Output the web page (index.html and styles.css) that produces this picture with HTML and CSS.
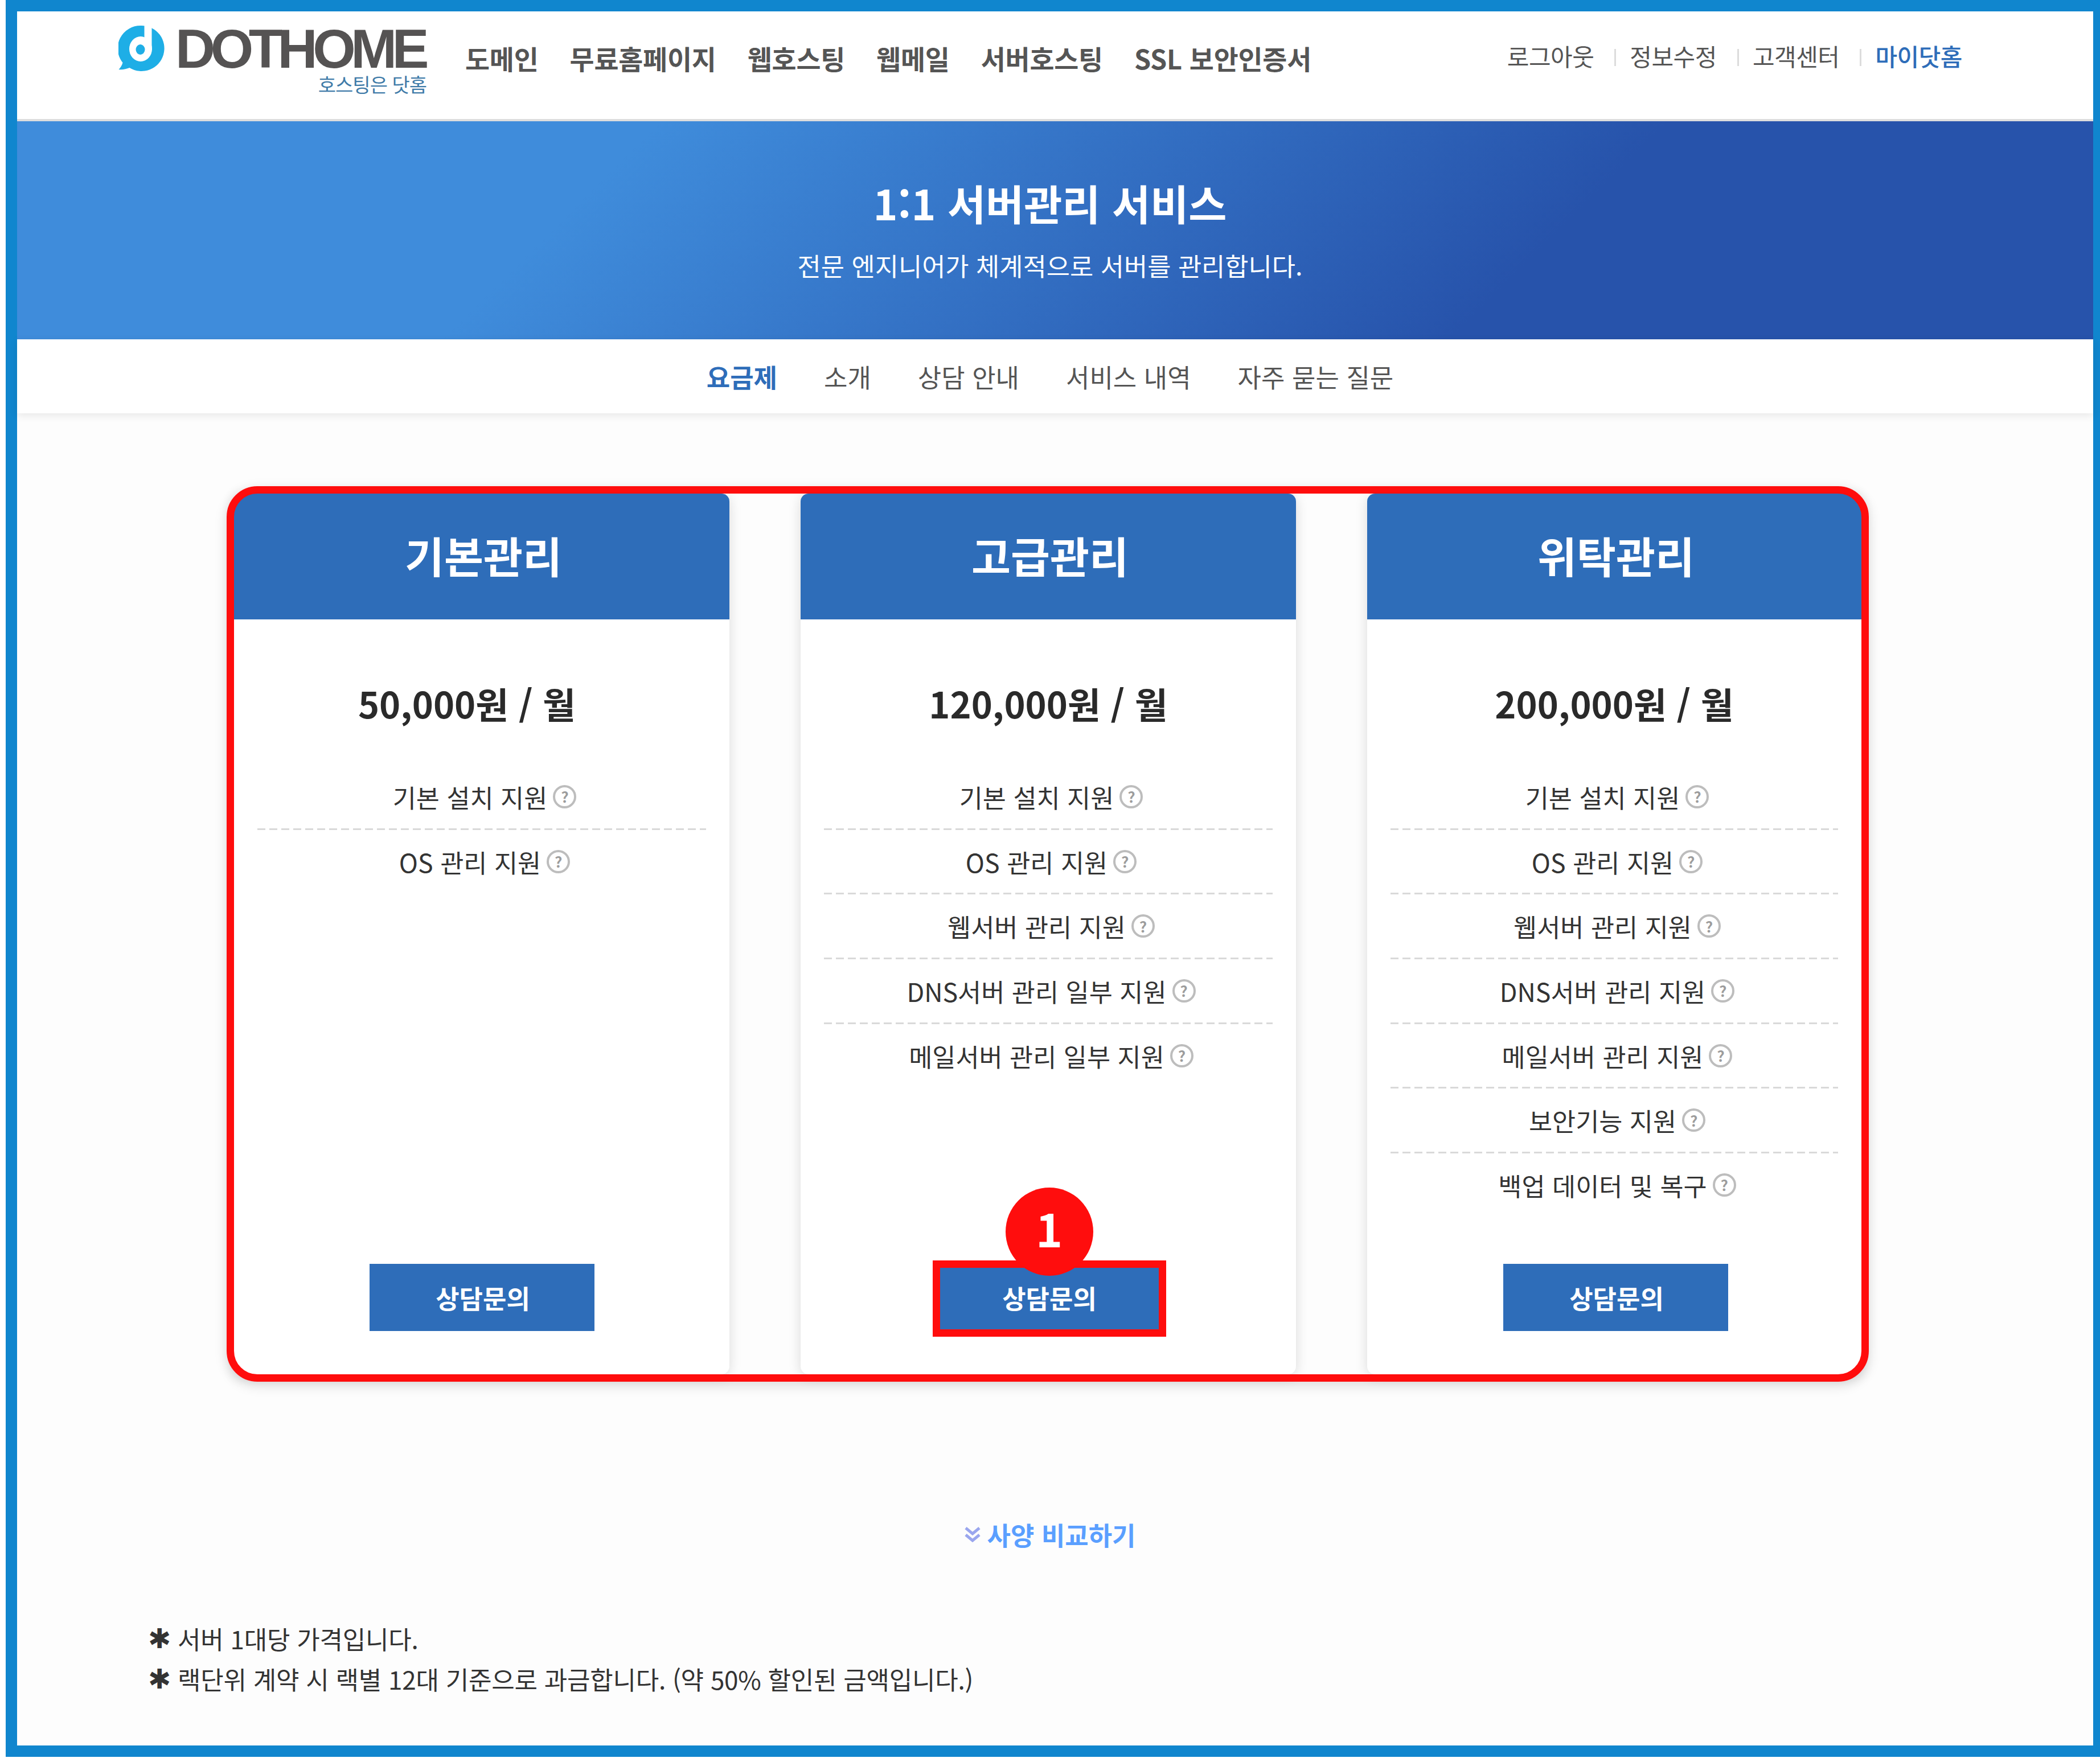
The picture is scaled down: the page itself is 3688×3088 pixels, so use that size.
FILE: index.html
```html
<!DOCTYPE html>
<html lang="ko">
<head>
<meta charset="utf-8">
<title>1:1 서버관리 서비스</title>
<link rel="stylesheet" href="styles.css">
</head>
<body>
<div class="frame">
  <header class="site-header">
    <a class="logo">
      <span class="logo-row">
        <svg class="logo-icon" viewBox="0 0 80 88" aria-hidden="true">
          <path class="logo-blue" d="M40 3a40 40 0 1 1-21 74c-6 2-12 4-19 3 3-3 6-8 7-12A40 40 0 0 1 40 3z"/>
          <rect class="logo-white" x="45" y="0" width="13" height="46"/>
          <ellipse class="logo-white" cx="38.5" cy="44" rx="20" ry="22"/>
          <ellipse class="logo-blue" cx="38" cy="45" rx="8" ry="9"/>
        </svg>
        <span class="logo-name">DOTHOME</span>
      </span>
      <span class="logo-tag">호스팅은 닷홈</span>
    </a>
    <nav class="main-nav">
      <span>도메인</span><span>무료홈페이지</span><span>웹호스팅</span><span>웹메일</span><span>서버호스팅</span><span>SSL 보안인증서</span>
    </nav>
    <nav class="util-nav">
      <span>로그아웃</span><i class="sep"></i><span>정보수정</span><i class="sep"></i><span>고객센터</span><i class="sep"></i><span class="util-active">마이닷홈</span>
    </nav>
  </header>

  <section class="hero">
    <h1 class="hero-title">1:1 서버관리 서비스</h1>
    <p class="hero-sub">전문 엔지니어가 체계적으로 서버를 관리합니다.</p>
  </section>

  <nav class="sub-nav">
    <span class="sub-active">요금제</span><span>소개</span><span>상담 안내</span><span>서비스 내역</span><span>자주 묻는 질문</span>
  </nav>

  <main class="content">
    <div class="plans">
      <article class="plan">
        <h2 class="plan-head">기본관리</h2>
        <div class="plan-body">
          <p class="price price-shifted">50,000원 / 월</p>
          <ul class="features">
            <li>기본 설치 지원<span class="help">?</span></li>
            <li>OS 관리 지원<span class="help">?</span></li>
          </ul>
          <a class="btn">상담문의</a>
        </div>
      </article>
      <article class="plan">
        <h2 class="plan-head">고급관리</h2>
        <div class="plan-body">
          <p class="price">120,000원 / 월</p>
          <ul class="features">
            <li>기본 설치 지원<span class="help">?</span></li>
            <li>OS 관리 지원<span class="help">?</span></li>
            <li>웹서버 관리 지원<span class="help">?</span></li>
            <li>DNS서버 관리 일부 지원<span class="help">?</span></li>
            <li>메일서버 관리 일부 지원<span class="help">?</span></li>
          </ul>
          <a class="btn">상담문의
            <span class="btn-mark"></span>
            <span class="badge">1</span>
          </a>
        </div>
      </article>
      <article class="plan">
        <h2 class="plan-head">위탁관리</h2>
        <div class="plan-body">
          <p class="price">200,000원 / 월</p>
          <ul class="features">
            <li>기본 설치 지원<span class="help">?</span></li>
            <li>OS 관리 지원<span class="help">?</span></li>
            <li>웹서버 관리 지원<span class="help">?</span></li>
            <li>DNS서버 관리 지원<span class="help">?</span></li>
            <li>메일서버 관리 지원<span class="help">?</span></li>
            <li>보안기능 지원<span class="help">?</span></li>
            <li>백업 데이터 및 복구<span class="help">?</span></li>
          </ul>
          <a class="btn">상담문의</a>
        </div>
      </article>
      <div class="plans-mark"></div>
    </div>

    <a class="compare">
      <svg class="compare-icon" viewBox="0 0 30 27" aria-hidden="true">
        <path d="M3 2l12 10L27 2M3 14l12 10 12-10"/>
      </svg>
      사양 비교하기
    </a>

    <ul class="notes">
      <li><span class="star">✱</span>서버 1대당 가격입니다.</li>
      <li><span class="star">✱</span>랙단위 계약 시 랙별 12대 기준으로 과금합니다. (약 50% 할인된 금액입니다.)</li>
    </ul>
  </main>
</div>
</body>
</html>
```
FILE: styles.css
```css
* { box-sizing: border-box; }
html, body { margin: 0; padding: 0; }
body {
  background: #fff;
  padding-left: 10px;
  overflow: hidden;
  font-family: "Noto Sans CJK KR", "Noto Sans", sans-serif;
  color: #333;
}
h1, h2, p, ul { margin: 0; padding: 0; }
ul { list-style: none; }

.frame {
  width: 3678px;
  height: 3086px;
  border: solid #1086ce;
  border-width: 20px 12px 20px 20px;
  background: #fdfdfd;
  display: flex;
  flex-direction: column;
}

/* header */
.site-header {
  height: 193px;
  flex: none;
  display: flex;
  align-items: flex-start;
  background: #fff;
  border-bottom: 4px solid #ddd;
  padding: 22px 230px 0 177px;
}
.logo { display: flex; flex-direction: column; align-items: flex-end; width: 542px; flex: none; }
.logo-row { display: flex; align-items: center; gap: 19px; height: 88px; }
.logo-icon { width: 81px; height: 88px; display: block; }
.logo-blue { fill: #1eaee6; }
.logo-white { fill: #fff; }
.logo-name {
  font-family: "Liberation Sans", sans-serif;
  font-weight: 700;
  font-size: 97px;
  line-height: 88px;
  letter-spacing: -8.4px;
  color: #555353;
  margin-right: 4px;
}
.logo-tag { font-size: 34px; line-height: 36px; color: #3f7ba8; letter-spacing: -1px; }

.main-nav {
  display: flex;
  gap: 55px;
  margin: 30px 0 0 68px;
  font-size: 46.8px;
  line-height: 60px;
  font-weight: 700;
  color: #555;
  letter-spacing: -.2px;
}
.util-nav {
  margin: 26px 0 0 auto;
  display: flex;
  align-items: center;
  font-size: 42px;
  line-height: 60px;
  color: #555;
  letter-spacing: -.5px;
}
.sep { display: block; width: 3px; height: 30px; background: #dcdcdc; margin: 6px 24px 0 36px; }
.util-active { color: #2e6db9; font-weight: 500; }

/* hero */
.hero {
  height: 383px;
  flex: none;
  padding: 97px 18px 0 0;
  text-align: center;
  color: #fff;
  background: linear-gradient(135deg, #3f8cdb 28%, #2753ab 72%);
}
.hero-title { font-size: 73px; line-height: 90px; font-weight: 700; }
.hero-sub { margin-top: 36px; font-size: 44.8px; line-height: 60px; }

/* sub nav */
.sub-nav {
  position: relative;
  height: 130px;
  flex: none;
  display: flex;
  align-items: center;
  justify-content: center;
  gap: 82px;
  padding-right: 18px;
  font-size: 45px;
  color: #555;
  background: #fff;
  box-shadow: 0 4px 14px rgba(0, 0, 0, .09);
}
.sub-active { color: #2e6db9; font-weight: 700; }

/* plans */
.content { padding: 141px 0 0 381px; flex: 1; }
.plans {
  position: relative;
  display: grid;
  grid-template-columns: 870px 870px 868px;
  gap: 125px;
  width: 2858px;
  height: 1547px;
}
.plan {
  display: flex;
  flex-direction: column;
  background: #fff;
  border-radius: 14px;
  box-shadow: 0 4px 22px rgba(0, 0, 0, .14);
}
.plan-head {
  height: 221px;
  flex: none;
  display: flex;
  align-items: center;
  justify-content: center;
  padding: 0 0 6px 6px;
  background: #2e6db9;
  color: #fff;
  font-size: 75px;
  font-weight: 700;
  border-radius: 14px 14px 0 0;
}
.plan-body {
  flex: 1;
  display: flex;
  flex-direction: column;
  align-items: center;
  padding: 102px 41px 76px;
}
.price { font-size: 63px; line-height: 90px; font-weight: 700; color: #2a2a2a; }
.price-shifted { margin-right: 52px; }
.features { width: 100%; margin-top: 64px; flex: 1; }
.features li {
  height: 113.7px;
  padding: 0 0 3px 10px;
  display: flex;
  align-items: center;
  justify-content: center;
  gap: 10px;
  font-size: 44.7px;
  color: #333;
}
.features li:not(:last-child) {
  background: repeating-linear-gradient(90deg, #d9d9d9 0 14px, transparent 14px 21px) bottom / 100% 3px no-repeat;
}
.help {
  width: 41px;
  height: 41px;
  flex: none;
  display: flex;
  align-items: center;
  justify-content: center;
  border: 4px solid #bdbdbd;
  border-radius: 50%;
  font-size: 26px;
  font-weight: 700;
  line-height: 1;
  color: #9c9c9c;
}
.btn {
  position: relative;
  width: 395px;
  height: 118px;
  flex: none;
  display: flex;
  align-items: center;
  justify-content: center;
  padding-left: 4px;
  background: #2e6db9;
  color: #fff;
  font-size: 45px;
  font-weight: 700;
}
.plan:last-of-type .btn { margin-left: 4px; }

/* annotations */
.plans-mark {
  position: absolute;
  inset: -13px;
  border: 13px solid #ff0d0d;
  border-radius: 54px;
  box-shadow: 0 6px 22px rgba(0, 0, 0, .14);
  pointer-events: none;
}
.btn-mark {
  position: absolute;
  left: -6px;
  right: -9px;
  top: -6px;
  bottom: -10px;
  border: 13px solid #ff0d0d;
}
.badge {
  position: absolute;
  left: 122px;
  top: -134px;
  width: 154px;
  height: 155px;
  display: flex;
  align-items: center;
  justify-content: center;
  padding-bottom: 16px;
  border-radius: 50%;
  background: #ff0d0d;
  color: #fff;
  font-size: 80px;
  font-weight: 700;
}

/* compare + notes */
.compare {
  display: flex;
  align-items: center;
  justify-content: center;
  gap: 10px;
  width: 2866px;
  margin: 251px 0 0 0;
  height: 60px;
  font-size: 45px;
  font-weight: 700;
  color: #5a9fff;
}
.compare-icon { width: 30px; height: 27px; fill: none; stroke: #9aa6ee; stroke-width: 5; }
.notes { margin: 117px 0 0 -151px; font-size: 44px; color: #333; letter-spacing: -.25px; }
.notes li { display: flex; align-items: center; height: 71px; }
.star { width: 52px; flex: none; font-family: "DejaVu Sans", sans-serif; font-size: 48px; font-weight: 700; color: #333; }
```
